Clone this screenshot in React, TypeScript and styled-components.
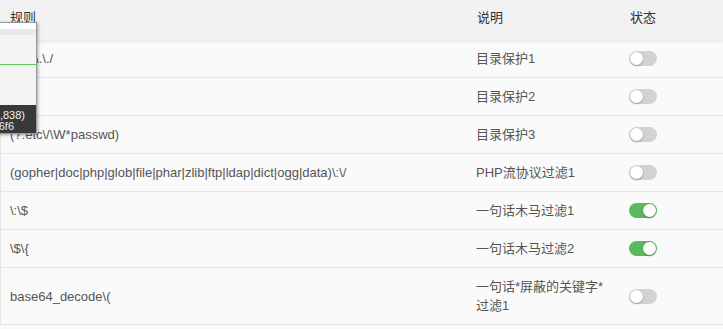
import styled, { createGlobalStyle } from "styled-components";

const GlobalStyle = createGlobalStyle`
  html, body {
    margin: 0;
    padding: 0;
    background: #fafafa;
    overflow: hidden;
  }
  body {
    font-family: "Liberation Sans", "Noto Sans CJK SC", sans-serif;
    font-size: 13px;
    color: #555;
  }
`;

const Page = styled.div`
  position: relative;
  width: 723px;
  height: 329px;
  overflow: hidden;
  background: #fafafa;
`;

const Head = styled.div`
  position: relative;
  z-index: 2;
  display: grid;
  grid-template-columns: 467px 153px 1fr;
  height: 40px;
  background: #f2f2f2;
  box-shadow: 0 2px 4px rgba(0, 0, 0, 0.07);
  color: #333;
`;

const HeadCell = styled.div`
  padding: 8px 10px 0;
  line-height: 19px;
`;

const Body = styled.div`
  border-left: 1px solid #e6e6e6;
`;

const Row = styled.div`
  display: grid;
  grid-template-columns: 466px 153px 1fr;
  align-items: center;
  border-bottom: 1px solid #e6e6e6;
`;

const Cell = styled.div`
  padding: 9px 10px 9px 9px;
  line-height: 19px;
  word-break: break-all;
`;

const Switch = styled.span<{ $on: boolean }>`
  position: relative;
  display: block;
  width: 28px;
  height: 15px;
  border-radius: 8px;
  background: ${(p) => (p.$on ? "#5cb85c" : "#d2d2d2")};
  &::after {
    content: "";
    position: absolute;
    top: 1px;
    left: ${(p) => (p.$on ? "14px" : "1px")};
    width: 13px;
    height: 13px;
    border-radius: 50%;
    background: #fff;
    box-shadow: 0 1px 2px rgba(0, 0, 0, 0.3);
  }
`;

const Picker = styled.div`
  position: absolute;
  z-index: 5;
  top: 22px;
  left: -120px;
  width: 155px;
  height: 110px;
  display: flex;
  flex-direction: column;
  background: #fff;
  border: 1px solid #9a9a9a;
  box-shadow: 1px 1px 3px rgba(0, 0, 0, 0.35);
`;

const PickerTop = styled.div`
  height: 6px;
  background: #fff;
`;

const PickerBar = styled.div`
  height: 6px;
  background: #e9e9e9;
`;

const PickerArea = styled.div`
  flex: 1;
  display: flex;
  flex-direction: column;
  justify-content: center;
  background: #f4f4f4;
`;

const GuideLine = styled.div`
  height: 1px;
  margin-top: -12px;
  background: #5cc95c;
`;

const PickerInfo = styled.div`
  height: 28px;
  padding-top: 5px;
  box-sizing: border-box;
  background: #383838;
  color: #f0f0f0;
  font-size: 11px;
  line-height: 11px;
`;

const InfoLine = styled.div<{ $right: number }>`
  text-align: right;
  padding-right: ${(p) => p.$right}px;
`;

const rules = [
  { rule: "\\.\\.\\/|\\.\\./", desc: "目录保护1", on: false },
  { rule: "\\.\\.\\\\", desc: "目录保护2", on: false },
  { rule: "(?:etc\\/\\W*passwd)", desc: "目录保护3", on: false },
  {
    rule: "(gopher|doc|php|glob|file|phar|zlib|ftp|ldap|dict|ogg|data)\\:\\/",
    desc: "PHP流协议过滤1",
    on: false,
  },
  { rule: "\\:\\$", desc: "一句话木马过滤1", on: true },
  { rule: "\\$\\{", desc: "一句话木马过滤2", on: true },
  { rule: "base64_decode\\(", desc: "一句话*屏蔽的关键字*过滤1", on: false },
];

export default function App() {
  return (
    <Page>
      <GlobalStyle />
      <Head>
        <HeadCell>规则</HeadCell>
        <HeadCell>说明</HeadCell>
        <HeadCell>状态</HeadCell>
      </Head>
      <Body>
        {rules.map((r) => (
          <Row key={r.desc}>
            <Cell>{r.rule}</Cell>
            <Cell>{r.desc}</Cell>
            <Cell>
              <Switch $on={r.on} />
            </Cell>
          </Row>
        ))}
      </Body>
      <Picker>
        <PickerTop />
        <PickerBar />
        <PickerArea>
          <GuideLine />
        </PickerArea>
        <PickerInfo>
          <InfoLine $right={11}>(1280,838)</InfoLine>
          <InfoLine $right={22}>#f6f6f6</InfoLine>
        </PickerInfo>
      </Picker>
    </Page>
  );
}
